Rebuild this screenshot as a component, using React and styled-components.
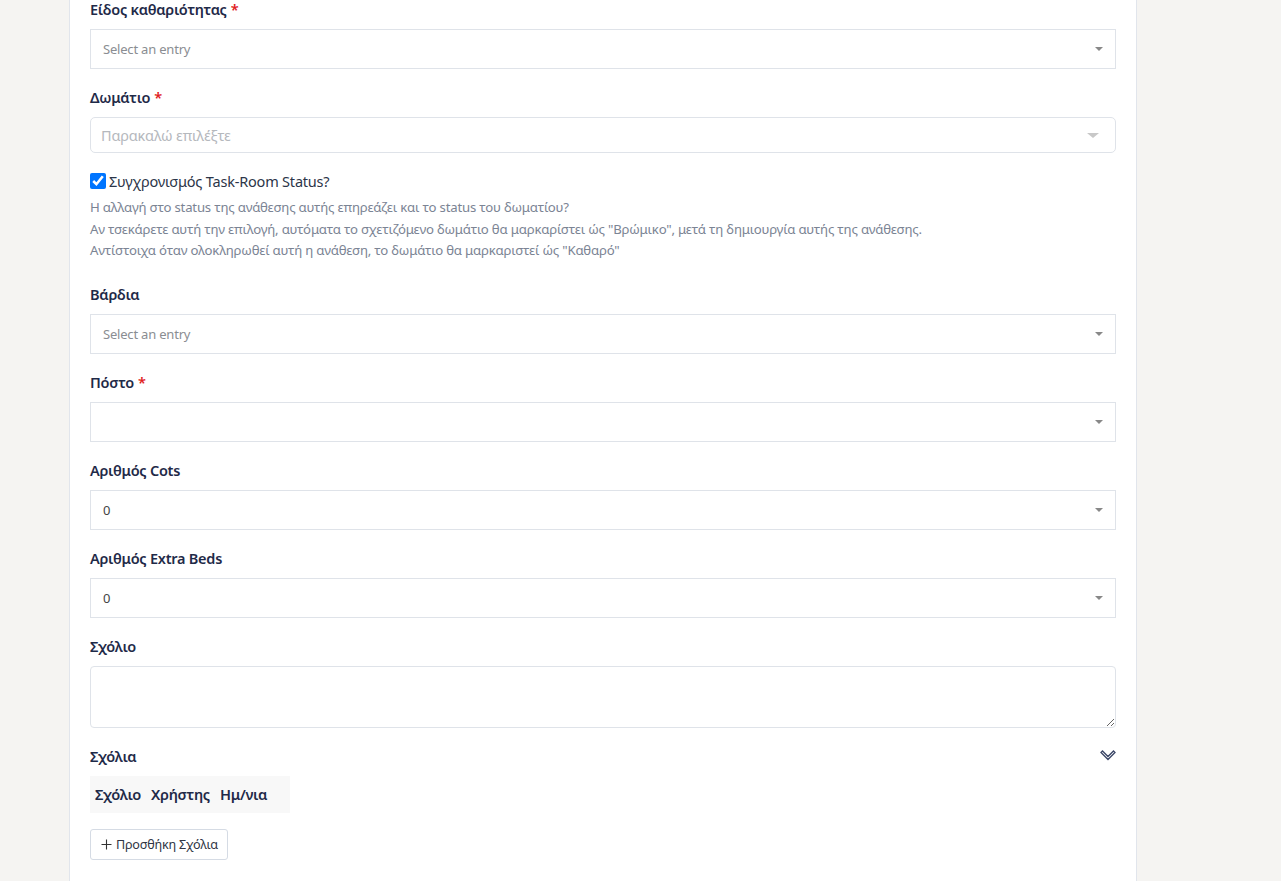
import React from "react";
import styled, { createGlobalStyle } from "styled-components";

const GlobalStyle = createGlobalStyle`
  html, body {
    margin: 0;
    padding: 0;
    background: #f5f4f2;
    font-family: "Noto Sans", "Open Sans", sans-serif;
    overflow: hidden;
  }
`;

const Page = styled.div`
  display: flex;
  padding-left: 69px;
  height: 881px;
`;

const Card = styled.div`
  box-sizing: border-box;
  width: 1068px;
  background: #fff;
  border-left: 1px solid #e1e5ec;
  border-right: 1px solid #e1e5ec;
  padding: 0 20px;
  margin-top: -1px;
`;

const Field = styled.div`
  display: flex;
  flex-direction: column;
  margin-bottom: 18px;
`;

const Label = styled.label`
  font-size: 14.5px;
  font-weight: 600;
  color: #1f2a48;
  line-height: 20px;
  height: 20px;
  margin-bottom: 10px;
  letter-spacing: -0.25px;
  display: flex;
  align-items: center;
  justify-content: space-between;
`;

const Star = styled.span`
  color: #e0201c;
  margin-left: 4px;
`;

const Select = styled.div`
  height: ${(p) => (p.$tall ? 38 : 34)}px;
  border: 1px solid #dfe3e9;
  border-radius: ${(p) => (p.$rounded ? 5 : 0)}px;
  display: flex;
  align-items: center;
  justify-content: space-between;
  padding: 0 12px 0 ${(p) => (p.$rounded ? 10 : 12)}px;
  background: #fff;
`;

const SelectText = styled.span`
  font-size: ${(p) => (p.$big ? 14.5 : 13)}px;
  color: ${(p) => (p.$placeholder ? (p.$big ? "#b5b8bd" : "#8a8d92") : "#444")};
  letter-spacing: -0.2px;
`;

const Caret = styled.span`
  width: 0;
  height: 0;
  border-left: ${(p) => (p.$big ? 6 : 4)}px solid transparent;
  border-right: ${(p) => (p.$big ? 6 : 4)}px solid transparent;
  border-top: ${(p) => (p.$big ? 5 : 4)}px solid ${(p) => (p.$big ? "#c8c8c8" : "#888")};
  margin-right: ${(p) => (p.$big ? 4 : 0)}px;
`;

const CheckRow = styled.label`
  display: flex;
  align-items: center;
  gap: 3px;
  height: 20px;
  margin-top: 18px;
  font-size: 14.5px;
  color: #2c3548;
  letter-spacing: -0.2px;
  input {
    margin: 0;
    width: 16px;
    height: 16px;
  }
`;

const Help = styled.div`
  margin-top: 6px;
  font-size: 13.2px;
  line-height: 21.5px;
  color: #7b8494;
  letter-spacing: -0.2px;
  margin-bottom: 22px;
`;

const TextArea = styled.textarea`
  height: 62px;
  box-sizing: border-box;
  border: 1px solid #dfe3e9;
  border-radius: 4px;
  resize: vertical;
  font-family: inherit;
  display: block;
`;

const Table = styled.table`
  border-collapse: collapse;
  width: 200px;
  background: #f8f8f8;
  th {
    height: 37px;
    padding: 0 5px;
    font-size: 14.6px;
    font-weight: 600;
    color: #1f2a48;
    text-align: left;
    letter-spacing: -0.3px;
    white-space: nowrap;
  }
  th:last-child {
    width: 100%;
  }
`;

const AddButton = styled.button`
  margin-top: 16px;
  height: 31px;
  display: inline-flex;
  align-items: center;
  gap: 4px;
  padding: 0 9px 0 10px;
  background: #fff;
  border: 1px solid #d5dbe4;
  border-radius: 3px;
  font-family: inherit;
  font-size: 12.6px;
  color: #2f3544;
  letter-spacing: -0.2px;
`;

const Chevron = () => (
  <svg width="16" height="11" viewBox="0 0 16 11">
    <path
      d="M1 2.5 L2.5 1 L8 6.5 L13.5 1 L15 2.5 L8 9.5 Z"
      fill="none"
      stroke="#3a4566"
      strokeWidth="1.3"
      strokeLinejoin="miter"
    />
  </svg>
);

const Plus = () => (
  <svg width="11" height="11" viewBox="0 0 11 11">
    <path d="M5.5 0.5 V10.5 M0.5 5.5 H10.5" stroke="#333" strokeWidth="1.1" />
  </svg>
);

function SelectField({ label, required, value, placeholder }) {
  return (
    <Field>
      <Label>
        <span>
          {label}
          {required && <Star>*</Star>}
        </span>
      </Label>
      <Select $tall>
        <SelectText $placeholder={placeholder}>{value}</SelectText>
        <Caret />
      </Select>
    </Field>
  );
}

function App() {
  return (
    <>
      <GlobalStyle />
      <Page>
        <Card>
          <SelectField label="Είδος καθαριότητας" required value="Select an entry" placeholder />
          <div>
            <Label>
              <span>
                Δωμάτιο<Star>*</Star>
              </span>
            </Label>
            <Select $rounded>
              <SelectText $placeholder $big>
                Παρακαλώ επιλέξτε
              </SelectText>
              <Caret $big />
            </Select>
          </div>
          <CheckRow>
            <input type="checkbox" defaultChecked />
            <span>Συγχρονισμός Task-Room Status?</span>
          </CheckRow>
          <Help>
            Η αλλαγή στο status της ανάθεσης αυτής επηρεάζει και το status του δωματίου?
            <br />
            Αν τσεκάρετε αυτή την επιλογή, αυτόματα το σχετιζόμενο δωμάτιο θα μαρκαρίστει ώς "Βρώμικο", μετά τη δημιουργία αυτής της ανάθεσης.
            <br />
            Αντίστοιχα όταν ολοκληρωθεί αυτή η ανάθεση, το δωμάτιο θα μαρκαριστεί ώς "Καθαρό"
          </Help>
          <SelectField label="Βάρδια" value="Select an entry" placeholder />
          <SelectField label="Πόστο" required value="" />
          <SelectField label="Αριθμός Cots" value="0" />
          <SelectField label="Αριθμός Extra Beds" value="0" />
          <Field>
            <Label>Σχόλιο</Label>
            <TextArea />
          </Field>
          <Label>
            <span>Σχόλια</span>
            <Chevron />
          </Label>
          <Table>
            <thead>
              <tr>
                <th>Σχόλιο</th>
                <th>Χρήστης</th>
                <th>Ημ/νια</th>
              </tr>
            </thead>
          </Table>
          <AddButton>
            <Plus />
            Προσθήκη Σχόλια
          </AddButton>
        </Card>
      </Page>
    </>
  );
}

export default App;
